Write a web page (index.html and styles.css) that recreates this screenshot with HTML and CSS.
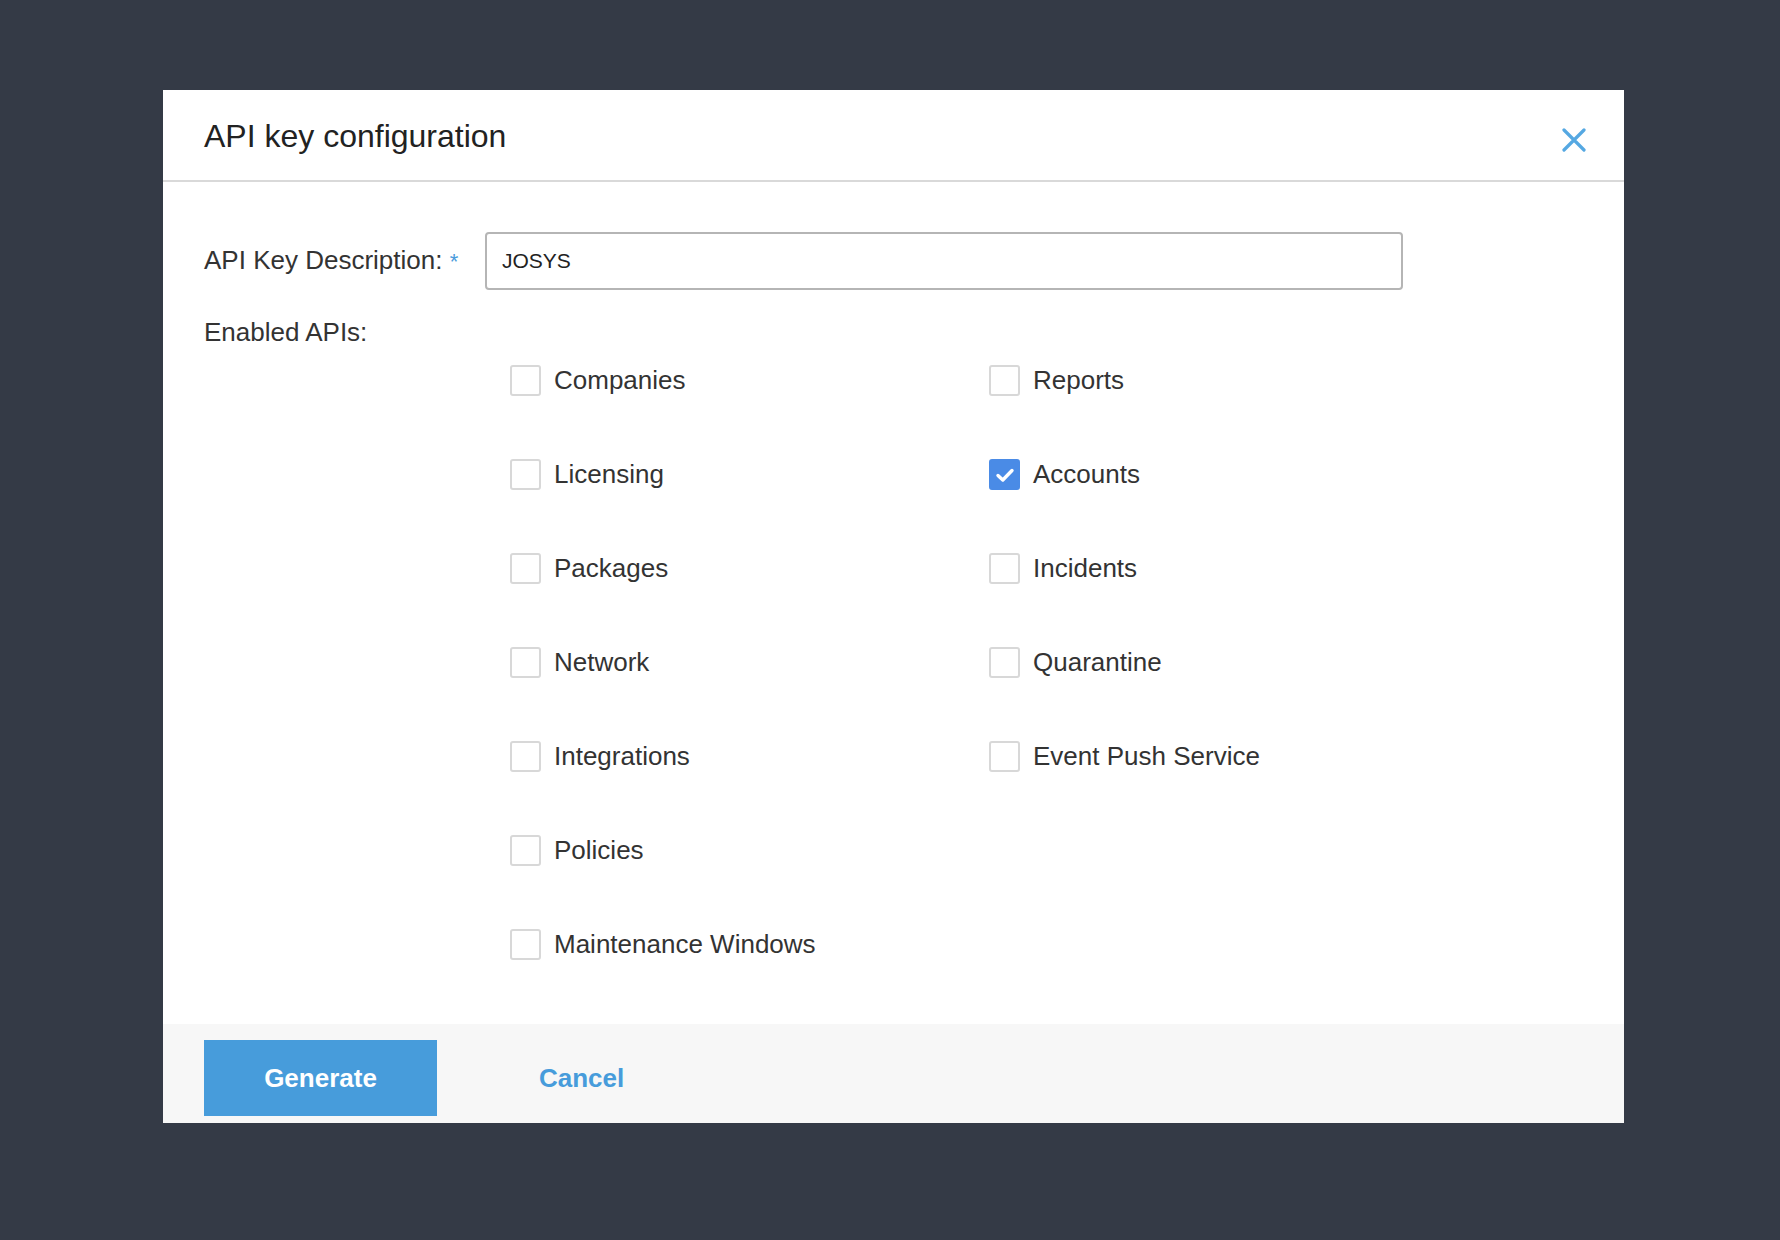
FILE: index.html
```html
<!DOCTYPE html>
<html lang="en">

<head>
    <meta charset="UTF-8">
    <meta name="viewport" content="width=device-width, initial-scale=1.0">
    <title>API key configuration</title>
    <link rel="stylesheet" href="styles.css">
</head>

<body>
    <div class="modal">
        <div class="modal-header">
            <h2 class="modal-title">API key configuration</h2>
            <button type="button" class="close-btn" aria-label="Close">
                <svg width="24" height="24" viewBox="0 0 24 24">
                    <path d="M2 2 L22 22 M22 2 L2 22" stroke="#55a8e2" stroke-width="3.2" stroke-linecap="round" fill="none" />
                </svg>
            </button>
        </div>

        <form class="modal-body" id="apiKeyForm">
            <div class="form-row">
                <label for="keyDescription" class="input-label">API Key Description: <span class="required">*</span></label>
                <input type="text" id="keyDescription" class="input-field" value="JOSYS">
            </div>

            <div class="input-label apis-label">Enabled APIs:</div>

            <div class="api-grid">
                <label class="api-item"><span class="box"></span>Companies</label>
                <label class="api-item"><span class="box"></span>Licensing</label>
                <label class="api-item"><span class="box"></span>Packages</label>
                <label class="api-item"><span class="box"></span>Network</label>
                <label class="api-item"><span class="box"></span>Integrations</label>
                <label class="api-item"><span class="box"></span>Policies</label>
                <label class="api-item"><span class="box"></span>Maintenance Windows</label>
                <label class="api-item"><span class="box"></span>Reports</label>
                <label class="api-item">
                    <span class="box checked">
                        <svg width="30" height="30" viewBox="0 0 30 30">
                            <path d="M8 15.5 L12.8 20 L22 10.5" stroke="#ffffff" stroke-width="3.4" stroke-linecap="round" stroke-linejoin="round" fill="none" />
                        </svg>
                    </span>Accounts
                </label>
                <label class="api-item"><span class="box"></span>Incidents</label>
                <label class="api-item"><span class="box"></span>Quarantine</label>
                <label class="api-item"><span class="box"></span>Event Push Service</label>
            </div>
        </form>

        <div class="modal-footer">
            <button type="submit" form="apiKeyForm" class="generate-btn">Generate</button>
            <button type="button" class="cancel-btn">Cancel</button>
        </div>
    </div>
</body>

</html>
```

FILE: styles.css
```css
body {
    font-family: "Liberation Sans", Arial, Helvetica, sans-serif;
    background-color: #343a46;
    margin: 0;
    padding: 90px 0 0 163px;
    height: 1240px;
    box-sizing: border-box;
}

.modal {
    width: 1461px;
    background-color: #ffffff;
}

.modal-header {
    display: flex;
    justify-content: space-between;
    align-items: flex-start;
    padding: 28px 38px 26px 41px;
    border-bottom: 2px solid #d9d9d9;
}

.modal-title {
    margin: 0;
    font-size: 32px;
    font-weight: normal;
    line-height: 36px;
    color: #222222;
}

.close-btn {
    background: none;
    border: none;
    padding: 0;
    margin-top: 10px;
    width: 24px;
    height: 24px;
    cursor: pointer;
}

.close-btn svg {
    display: block;
}

.modal-body {
    padding: 50px 41px 64px;
}

.form-row {
    display: flex;
    align-items: center;
}

.input-label {
    font-size: 26px;
    line-height: 30px;
    color: #333333;
}

.form-row .input-label {
    width: 281px;
    flex-shrink: 0;
}

.required {
    color: #4a9cdc;
    font-size: 22px;
}

.input-field {
    width: 918px;
    height: 58px;
    padding: 0 15px;
    border: 2px solid #b5b5b5;
    border-radius: 4px;
    box-sizing: border-box;
    font-family: "Liberation Sans", Arial, Helvetica, sans-serif;
    font-size: 21px;
    color: #222222;
    outline: none;
}

.apis-label {
    margin-top: 27px;
}

.api-grid {
    display: grid;
    grid-auto-flow: column;
    grid-template-rows: repeat(7, 32px);
    grid-template-columns: 479px 479px;
    row-gap: 62px;
    margin: 17px 0 0 306px;
}

.api-item {
    display: flex;
    align-items: center;
    font-size: 26px;
    line-height: 30px;
    color: #333333;
    cursor: pointer;
}

.box {
    width: 31px;
    height: 31px;
    margin-right: 13px;
    border: 2px solid #d8d8d8;
    border-radius: 3px;
    box-sizing: border-box;
    flex-shrink: 0;
}

.box.checked {
    background-color: #4a8be6;
    border-color: #4a8be6;
    position: relative;
}

.box.checked svg {
    position: absolute;
    left: -1px;
    top: -1px;
}

.modal-footer {
    display: flex;
    align-items: center;
    background-color: #f7f7f7;
    padding: 16px 41px 7px;
}

.generate-btn {
    width: 233px;
    height: 76px;
    background-color: #479cdb;
    color: #ffffff;
    border: none;
    font-family: "Liberation Sans", Arial, Helvetica, sans-serif;
    font-size: 26px;
    font-weight: bold;
    cursor: pointer;
}

.cancel-btn {
    margin-left: 102px;
    padding: 0;
    background: none;
    border: none;
    color: #479cdb;
    font-family: "Liberation Sans", Arial, Helvetica, sans-serif;
    font-size: 26px;
    font-weight: bold;
    cursor: pointer;
}
```
